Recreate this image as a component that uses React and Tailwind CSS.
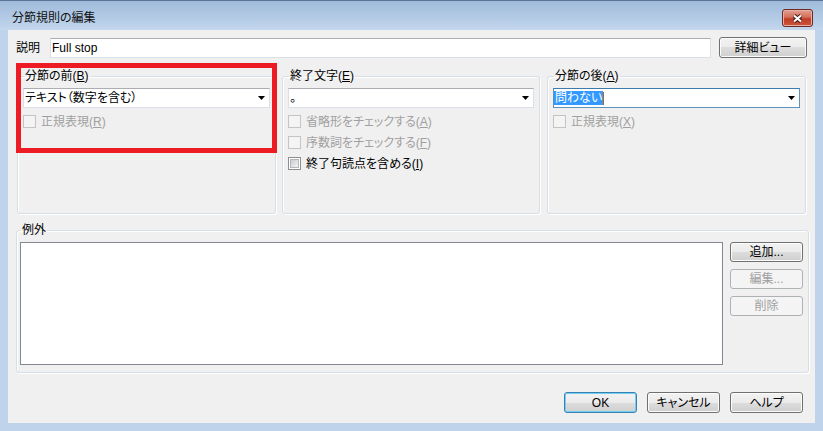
import React from 'react';

const BTN = "flex items-center justify-center rounded-[3px] border border-[#707070] bg-[linear-gradient(to_bottom,#f2f2f2_0%,#ebebeb_50%,#dddddd_50%,#cfcfcf_100%)] shadow-[inset_0_0_0_1px_#fcfcfc] text-black";
const BTN_DEFAULT = "flex items-center justify-center rounded-[3px] border border-[#3c7fb1] bg-[linear-gradient(to_bottom,#f2f2f2_0%,#ebebeb_50%,#dddddd_50%,#cfcfcf_100%)] shadow-[inset_0_0_0_1px_#6fd0f6] text-black";
const BTN_OFF = "flex items-center justify-center rounded-[3px] border border-[#adb2b5] bg-[#f4f4f4] text-[#a0a0a0]";

function Combo({ children, focused }) {
    return (
        <div
            className={
                focused
                    ? "flex h-[20px] items-center border border-[#5c93bc] border-t-[#3d7bad] bg-white pr-[4px]"
                    : "flex h-[20px] items-center border border-[#dbdfe6] border-t-[#abadb3] bg-white pl-[1px] pr-[4px]"
            }
        >
            <div className="flex flex-1 items-center leading-[14px]">{children}</div>
            <svg width="7" height="4" viewBox="0 0 7 4">
                <path d="M0 0h7L3.5 4z" fill="#000" />
            </svg>
        </div>
    );
}

function Check({ children, disabled }) {
    return (
        <div className="flex h-[21px] items-center gap-[5px]">
            {disabled ? (
                <span className="block h-[13px] w-[13px] border border-[#c4c4c4] bg-[#f4f4f4]" />
            ) : (
                <span className="block h-[13px] w-[13px] border border-[#8e8f8f] bg-white p-[1px]">
                    <span className="block h-full w-full border border-[#b3b6bb] bg-[linear-gradient(135deg,#c9ccd1,#f4f4f4)]" />
                </span>
            )}
            <span className={disabled ? "leading-[14px] text-[#a0a0a0]" : "leading-[14px] text-black"}>{children}</span>
        </div>
    );
}

function Group({ title, className, children }) {
    return (
        <fieldset className={"rounded-[3px] border border-[#d5dfe5] shadow-[inset_1px_1px_0_#fff,1px_1px_0_#fff] px-[5px] " + className}>
            <legend className="ml-[1px] px-[1px] leading-[14px] text-black">{title}</legend>
            {children}
        </fieldset>
    );
}

export default function App() {
    return (
        <div className="flex h-[431px] w-[823px] flex-col bg-[#bfd4eb] text-[12px] font-['Liberation_Sans','Noto_Sans_CJK_JP',sans-serif] [font-feature-settings:'palt']">
            {/* title bar */}
            <div className="flex h-[30px] items-start justify-between border-t border-[#5a7696] bg-[linear-gradient(to_bottom,#9fbadb,#c3d7ed)] pl-[12px] pr-[10px] pt-[8px]">
                <span className="leading-[18px] text-[#111]">分節規則の編集</span>
                <button className="flex h-[18px] w-[31px] items-center justify-center rounded-[3px] border border-[#6d2a22] bg-[linear-gradient(to_bottom,#e2a193_0%,#d36e5a_45%,#c13c27_55%,#c9573a_100%)] shadow-[inset_0_0_0_1px_#e8b0a4]">
                    <svg width="13" height="11" viewBox="0 0 13 11">
                        <path d="M3 2.5l7 6M10 2.5l-7 6" stroke="#3b1510" strokeWidth="4" />
                        <path d="M3 2.5l7 6M10 2.5l-7 6" stroke="#fff" strokeWidth="2.2" />
                    </svg>
                </button>
            </div>

            <div className="flex flex-1 px-[8px] pb-[8px]">
                <div className="relative flex flex-1 flex-col bg-[#f0f0f0]">
                    {/* description row */}
                    <div className="mt-[7px] flex h-[21px] items-center pl-[8px] pr-[8px]">
                        <span className="w-[34px] leading-[14px] text-black">説明</span>
                        <div className="flex h-[20px] flex-1 items-center border border-[#dbdfe6] border-t-[#abadb3] bg-white pl-[1px] leading-[14px]">
                            Full stop
                        </div>
                        <button className={BTN + " ml-[8px] h-[21px] w-[88px]"}>詳細ビュー</button>
                    </div>

                    {/* three groups */}
                    <div className="mt-[11px] flex pl-[9px]">
                        <Group title={<>分節の前(<u className="underline-offset-[1px]">B</u>)</>} className="h-[145px] w-[259px]">
                            <div className="mt-[5px]">
                                <Combo>テキスト（数字を含む）</Combo>
                            </div>
                            <div className="mt-[3px]">
                                <Check disabled>正規表現(<u className="underline-offset-[1px]">R</u>)</Check>
                            </div>
                        </Group>
                        <Group title={<>終了文字(<u className="underline-offset-[1px]">E</u>)</>} className="ml-[6px] h-[145px] w-[258px]">
                            <div className="mt-[5px]">
                                <Combo>。</Combo>
                            </div>
                            <div className="mt-[3px]">
                                <Check disabled>省略形をチェックする(<u className="underline-offset-[1px]">A</u>)</Check>
                                <Check disabled>序数詞をチェックする(<u className="underline-offset-[1px]">F</u>)</Check>
                                <Check>終了句読点を含める(<u className="underline-offset-[1px]">I</u>)</Check>
                            </div>
                        </Group>
                        <Group title={<>分節の後(<u className="underline-offset-[1px]">A</u>)</>} className="ml-[7px] h-[145px] w-[259px]">
                            <div className="mt-[5px]">
                                <Combo focused>
                                    <span className="bg-[#3399ff] px-[1px] text-white">問わない</span>
                                    <span className="h-[13px] w-[1px] bg-[#c86400]" />
                                </Combo>
                            </div>
                            <div className="mt-[3px]">
                                <Check disabled>正規表現(<u className="underline-offset-[1px]">X</u>)</Check>
                            </div>
                        </Group>
                    </div>

                    {/* exceptions */}
                    <fieldset className="ml-[8px] mt-[9px] h-[150px] w-[793px] rounded-[3px] border border-[#d5dfe5] shadow-[inset_1px_1px_0_#fff,1px_1px_0_#fff] pl-[3px] pr-[4px]">
                        <legend className="ml-[1px] px-[1px] leading-[14px] text-black">例外</legend>
                        <div className="mt-[5px] flex">
                            <div className="h-[123px] w-[703px] border border-[#828790] bg-white" />
                            <div className="ml-[7px] flex w-[73px] flex-col gap-[7px]">
                                <button className={BTN + " h-[20px]"}>追加...</button>
                                <button className={BTN_OFF + " h-[20px]"}>編集...</button>
                                <button className={BTN_OFF + " h-[20px]"}>削除</button>
                            </div>
                        </div>
                    </fieldset>

                    {/* dialog buttons */}
                    <div className="mt-[19px] flex justify-end gap-[10px] pr-[12px]">
                        <button className={BTN_DEFAULT + " h-[21px] w-[73px]"}>OK</button>
                        <button className={BTN + " h-[21px] w-[73px]"}>キャンセル</button>
                        <button className={BTN + " h-[21px] w-[73px]"}>ヘルプ</button>
                    </div>

                    {/* red annotation frame */}
                    <div className="absolute left-[8px] top-[33px] h-[90px] w-[261px] border-[5px] border-[#ed1c24]" />
                </div>
            </div>
        </div>
    );
}
